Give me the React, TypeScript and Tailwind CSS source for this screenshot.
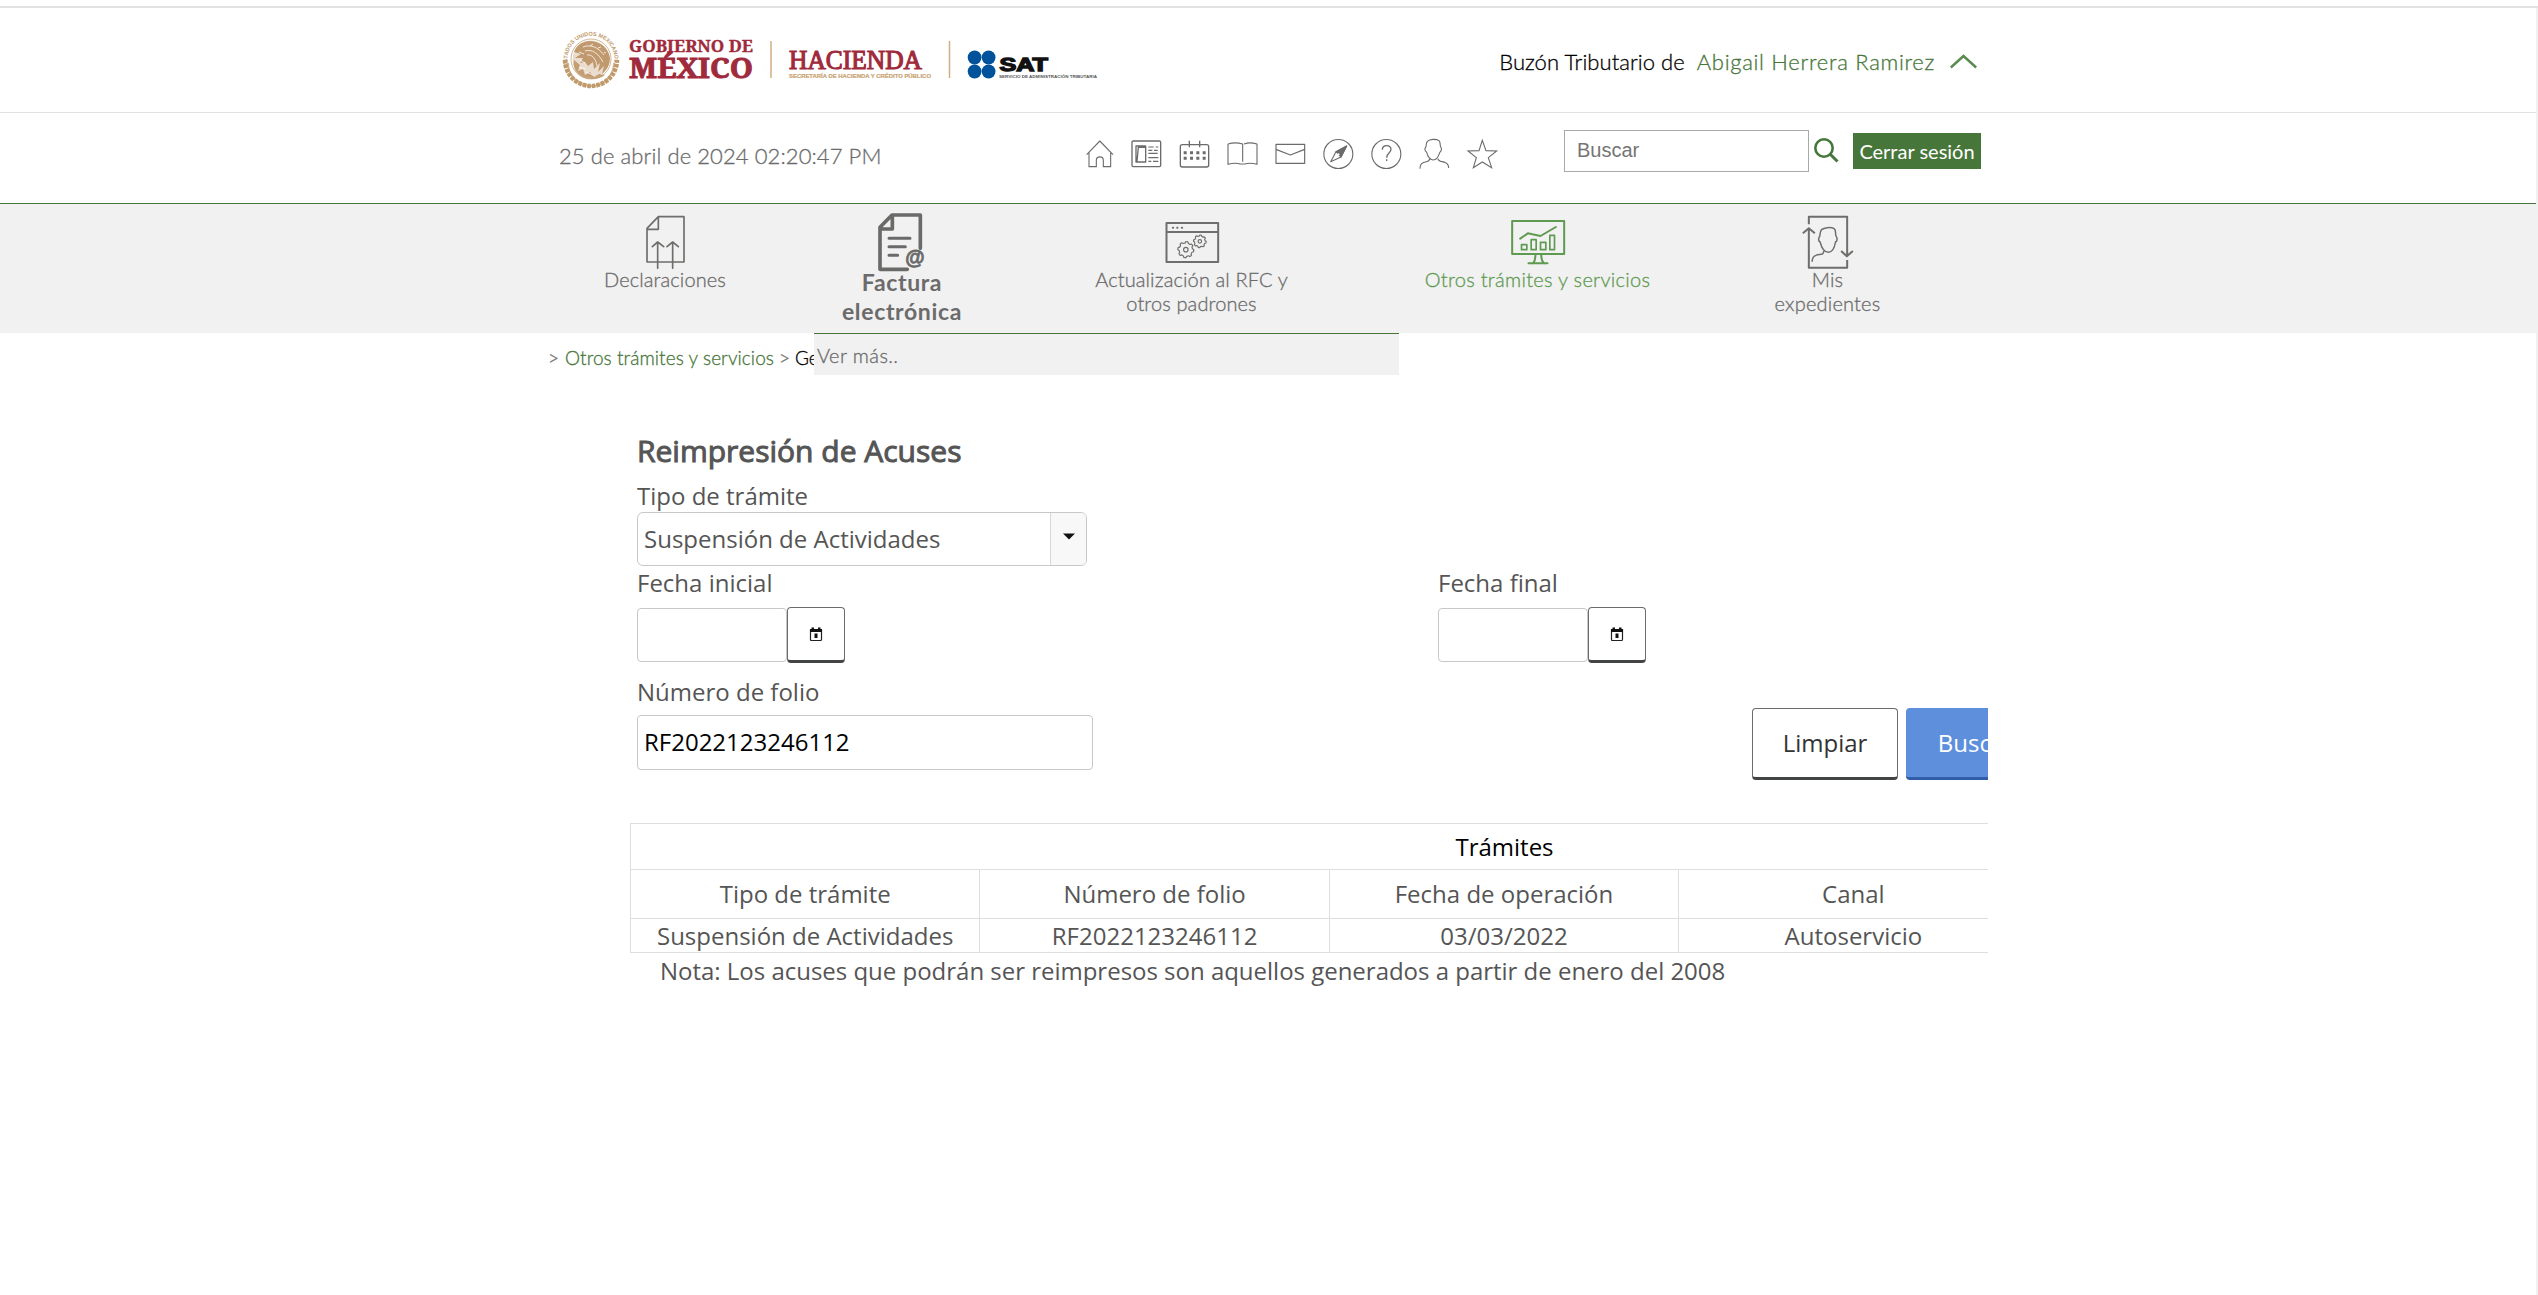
import React from "react";

const lato = "font-['Lato','Open_Sans',sans-serif]";
const openSans = "font-['Open_Sans','Noto_Sans',sans-serif]";

function Logos() {
  return (
    <svg width="552" height="64" viewBox="560 28 552 64" className="block">
      <defs>
        <path id="seal-arc" d="M568.5 66 A23.5 23.5 0 1 1 613.5 66" />
      </defs>
      <g fill="none" stroke="#c09a6b">
        <circle cx="591" cy="59" r="20" strokeWidth="1" opacity=".7" />
        <path d="M565 60 A26 26 0 0 0 617 60" strokeWidth="4.5" strokeDasharray="3.6 1" />
        <path d="M568 63 A23 23 0 0 0 614 63" strokeWidth="2" opacity=".7" />
      </g>
      <text fontFamily="Liberation Sans" fontWeight="700" fontSize="5.6" fill="#c09a6b">
        <textPath href="#seal-arc" textLength="84" lengthAdjust="spacingAndGlyphs">ESTADOS UNIDOS MEXICANOS</textPath>
      </text>
      <g fill="#b98f5e">
        <path d="M574 52 C577 43 587 39 596 42 C603 44 609 50 610 58 C610 65 607 70 602 74 L604 66 L598 72 L600 63 L594 69 L593 62 L588 66 L585 62 L580 63 L583 58 L575 58 L581 54 Z" opacity=".85" />
        <path d="M574 60 C572 68 577 75 585 78 C592 80 600 79 605 75 L599 74 L594 77 L590 72 L585 75 L583 69 L578 71 L580 65 Z" opacity=".8" />
        <circle cx="591" cy="59" r="18.500" opacity=".3" />
      </g>
      <g fill="none" stroke="#fff" strokeWidth=".9" opacity=".85">
        <path d="M583 47 C590 44 598 47 604 55 M585 51 C592 49 598 53 603 62 M587 55 C592 54 596 59 597 66 M579 52 l5 2 M580 60 l5 3 M579 67 l7 2 M586 72 l7 3 M590 46 l3 -2 M598 48 l3 -1 M604 52 l2 1" />
      </g>
      <g fontFamily="Noto Serif, Liberation Serif, serif" fontWeight="700" fill="#9f2a3c" stroke="#9f2a3c">
        <text x="629" y="51.500" fontSize="16.500" strokeWidth=".35" textLength="124" lengthAdjust="spacingAndGlyphs">GOBIERNO DE</text>
        <text x="629" y="78.300" fontSize="27.500" strokeWidth=".9" textLength="124" lengthAdjust="spacingAndGlyphs">MÉXICO</text>
      </g>
      <text x="789" y="69" fontFamily="Liberation Serif, serif" fontSize="26.5" fill="#9f2a3c" stroke="#9f2a3c" strokeWidth="1.1" textLength="133" lengthAdjust="spacingAndGlyphs">HACIENDA</text>
      <text x="789" y="78" fontFamily="Liberation Sans" fontWeight="700" fontSize="5.6" fill="#c9a373" stroke="#c9a373" strokeWidth=".2" textLength="142" lengthAdjust="spacingAndGlyphs">SECRETARÍA DE HACIENDA Y CRÉDITO PÚBLICO</text>
      <path d="M771 41V78M949.500 41V78" stroke="#d0ae84" strokeWidth="1.5" />
      <g fill="#00529b">
        <circle cx="974.600" cy="57.500" r="6.900" />
        <circle cx="988.600" cy="57.500" r="6.900" />
        <circle cx="974.600" cy="71.500" r="6.900" />
        <circle cx="988.600" cy="71.500" r="6.900" />
      </g>
      <text x="999.500" y="71" fontFamily="Liberation Sans" fontWeight="700" fontSize="18" fill="#111" stroke="#111" strokeWidth="1.3" textLength="48.500" lengthAdjust="spacingAndGlyphs">SAT</text>
      <text x="999" y="78" fontFamily="Liberation Sans" fontWeight="700" fontSize="4.4" fill="#555" textLength="98" lengthAdjust="spacingAndGlyphs">SERVICIO DE ADMINISTRACIÓN TRIBUTARIA</text>
    </svg>
  );
}

function ToolIcon({ index, children }: { index: number; children: React.ReactNode }) {
  return (
    <svg width="30" height="30" viewBox={`${71 + index * 144} 87 90 90`} className="block overflow-visible" fill="none" stroke="#6b6b6b" strokeWidth="3.3" strokeLinejoin="round">
      {children}
    </svg>
  );
}

function Toolbar() {
  return (
    <div className="flex gap-[18px]">
      <ToolIcon index={0}>
        <path d="M79 134L118.500 93L158 134M86 128V170H108V151a10.500 10.500 0 0 1 21 0V170H151V128" />
      </ToolIcon>
      <ToolIcon index={1}>
        <rect x="215" y="93" width="86" height="77" rx="4" strokeWidth="4" />
        <path d="M227 108H256V156H227ZM230 154L234 112H254" strokeWidth="4" />
        <path d="M264 111H280M286 111H294M264 121H276M281 121H292M264 130H292M264 143H294M264 154H273M278 154H294" />
      </ToolIcon>
      <ToolIcon index={2}>
        <rect x="360" y="104" width="85" height="67" rx="6" strokeWidth="4" />
        <path d="M387 92V112M418 92V112" strokeWidth="4" />
        <path d="M370 128H436M370 145H436" strokeWidth="9" strokeDasharray="9 10" />
      </ToolIcon>
      <ToolIcon index={3}>
        <path d="M503 102Q525 95 547 102V155M503 102V163Q525 157 540 162H553Q570 157 590 163V102Q568 95 551 102" />
      </ToolIcon>
      <ToolIcon index={4}>
        <path d="M647 103H733V160H647ZM647 118L690 135L733 118" strokeWidth="3.500" />
      </ToolIcon>
      <ToolIcon index={5}>
        <circle cx="834" cy="132" r="43.500" />
        <path d="M859 108L827 125L811 155L842 141Z" />
        <path d="M859 108L827 125L842 141Z" fill="#6b6b6b" />
        <circle cx="834" cy="133" r="3.500" fill="#fff" stroke="none" />
      </ToolIcon>
      <ToolIcon index={6}>
        <circle cx="978" cy="132" r="43.500" />
        <path d="M966 119C966 103 992 103 992 118C992 130 979 128 979 143M979 148V153" strokeWidth="4" />
      </ToolIcon>
      <ToolIcon index={7}>
        <path d="M1101 94C1108 87 1128 86 1136 92C1142 99 1138 106 1141 110C1146 118 1142 124 1138 128C1134 142 1128 150 1118 150C1107 148 1102 138 1099 127C1093 122 1093 115 1097 110C1098 104 1097 99 1101 94ZM1108 146C1108 157 1098 153 1088 158C1082 161 1079 167 1079 176M1133 146C1134 157 1146 153 1156 158C1162 161 1165 167 1165 174" />
      </ToolIcon>
      <ToolIcon index={8}>
        <path d="M1266 91L1277 122L1309 123L1284 143L1294 173L1266 156L1239 173L1248 143L1223 123L1256 122Z" strokeLinejoin="miter" />
      </ToolIcon>
    </div>
  );
}

function Gear({ cx, cy, r }: { cx: number; cy: number; r: number }) {
  const points = Array.from({ length: 48 }, (_, i) => {
    const a = (i / 48) * Math.PI * 2;
    const radius = i % 6 < 3 ? r : r * 0.83;
    return `${cx + radius * Math.cos(a)},${cy + radius * Math.sin(a)}`;
  }).join(" ");
  return (
    <>
      <polygon points={points} />
      <circle cx={cx} cy={cy} r={r * 0.28} />
    </>
  );
}

function NavIcon({ viewBox, width, color, children }: { viewBox: string; width: number; color: string; children: React.ReactNode }) {
  return (
    <svg viewBox={viewBox} width={width} height="65" className="block overflow-visible" fill="none" stroke={color} strokeWidth="5" strokeLinejoin="round" strokeLinecap="round">
      {children}
    </svg>
  );
}

const navLabel = "-mt-0.5 text-center text-xl leading-6 font-light [-webkit-text-stroke:0.3px]";

function Navigation() {
  return (
    <nav className="relative h-[130px] border-t border-[#47763a] bg-[#f1f1f1]">
      <div className={`mx-auto flex w-[1440px] text-[#6b6b6b] ${lato}`}>
        <div className="flex w-[234px] flex-col items-center">
          <NavIcon viewBox="312 27 126 195" width={42} color="#6e6e6c">
            <path d="M355 65H432V201H321V100ZM355 65V103H323M353 220V141M337 155L353 141L371 155M398 220V141M381 155L398 141L415 155" />
          </NavIcon>
          <span className={`${navLabel} tracking-[0.1px]`}>Declaraciones</span>
        </div>
        <div className="flex w-60 flex-col items-center">
          <NavIcon viewBox="1008 27 156 195" width={52} color="#6a6a69">
            <path d="M1141 160V60H1056L1020 97V223H1102M1057 62V102H1022" strokeWidth="11" />
            <path d="M1047 130H1110M1047 155H1096M1047 181H1073" strokeWidth="9" />
            <text x="1096" y="208" fontFamily="Liberation Sans" fontWeight="700" fontSize="60" fill="#6a6a69" stroke="#6a6a69" strokeWidth="2.5" textLength="58" lengthAdjust="spacingAndGlyphs">@</text>
          </NavIcon>
          <span className="-mt-px text-center text-[23px] leading-[29px] font-bold tracking-[0.65px]">Factura<br />electrónica</span>
        </div>
        <div className="flex w-[339px] flex-col items-center">
          <NavIcon viewBox="364.5 27 180 195" width={60} color="#6e6e6c">
            <path d="M378 84H533V201H378ZM378 111H533" strokeWidth="6" />
            <path d="M397 98.500H398M410 98.500H411M424 98.500H425" strokeWidth="6" />
            <g strokeWidth="3.500">
              <Gear cx={436} cy={164} r={24} />
              <Gear cx={478} cy={139} r={19} />
            </g>
          </NavIcon>
          <span className={`${navLabel} tracking-[0.12px]`}>Actualización al RFC y<br />otros padrones</span>
        </div>
        <div className="flex w-[353px] flex-col items-center text-[#5f9a51]">
          <NavIcon viewBox="1402.5 27 180 195" width={60} color="#5f9a51">
            <path d="M1415 78H1571V177H1415ZM1485 179Q1484 200 1477 205M1502 179Q1503 200 1511 205M1464 205H1521M1439 131L1462 115L1500 123L1546 96" strokeWidth="6" />
            <path d="M1443 149H1459V164H1443ZM1472 134H1487V164H1472ZM1500 142H1516V164H1500ZM1528 121H1542V164H1528Z" />
          </NavIcon>
          <span className={`${navLabel} tracking-[0.3px]`}>Otros trámites y servicios</span>
        </div>
        <div className="flex w-[227px] flex-col items-center">
          <NavIcon viewBox="772.5 27 180 195" width={60} color="#6e6e6c">
            <path d="M805 88V65H920V183M902 168L919 184L937 168M920 195V218H805V100M787 115L805 100L823 115" strokeLinecap="butt" strokeWidth="6" />
            <path d="M843 104C850 98 870 95 881 101C888 107 884 116 886 122C892 130 890 139 885 141C882 159 876 171 864 172C851 172 843 158 839 141C833 139 833 130 838 123C839 116 838 110 843 104ZM849 170C850 182 836 176 826 181C819 184 815 190 815 199" strokeWidth="4.500" />
          </NavIcon>
          <span className={`${navLabel} tracking-[0.2px]`}>Mis<br />expedientes</span>
        </div>
      </div>
      <div className={`absolute top-[129px] left-[814px] z-10 h-[42px] w-[585px] border-t border-[#47763a] bg-[#f1f1f1] pt-[9px] pl-[3px] text-xl leading-6 font-light tracking-[0.4px] text-[#6b6b6b] [-webkit-text-stroke:0.3px] ${lato}`}>
        Ver más..
      </div>
    </nav>
  );
}

function CalendarIcon() {
  return (
    <svg width="14" height="15" viewBox="0 0 14 15" className="block">
      <path d="M1.500 2.500H12.500V12.500Q12.500 13.500 11.500 13.500H2.500Q1.500 13.500 1.500 12.500Z" fill="none" stroke="#222" strokeWidth="1.200" />
      <path d="M1 2H13V5H1ZM2.500 0.500H5V3H2.500ZM9 0.500H11.500V3H9ZM5.500 6.500H8.500V11H5.500Z" fill="#111" />
    </svg>
  );
}

function DateField({ label }: { label: string }) {
  return (
    <div>
      <div className="leading-8">{label}</div>
      <div className="mt-2 flex items-start">
        <div className="mt-px h-[54px] w-[150px] rounded border border-[#c8c8c8] bg-white" />
        <button className="flex h-14 w-[58px] items-center justify-center rounded border border-b-[3px] border-[#6b6b6b] border-b-[#434545] bg-white">
          <CalendarIcon />
        </button>
      </div>
    </div>
  );
}

const rows = [
  { height: "h-[49px] pb-0.5", cells: ["Tipo de trámite", "Número de folio", "Fecha de operación", "Canal", ""] },
  { height: "h-[34px]", cells: ["Suspensión de Actividades", "RF2022123246112", "03/03/2022", "Autoservicio", ""] },
];

export default function App() {
  return (
    <div className="h-[1295px] overflow-hidden bg-white pt-1.5">
      <div className="h-full border-t-2 border-[#e1e1e1]">
        <div className="h-full border-r-2 border-[#f1f1f1]">
          <header className={`font-light ${lato}`}>
            <div className="h-[105px] border-b border-[#e1e1e1]">
              <div className="mx-auto flex w-[1440px] items-center justify-between pt-5 pr-[11px] pl-3">
                <Logos />
                <div className="flex items-center pt-[3px] text-[22px] leading-7 [-webkit-text-stroke:0.3px]">
                  <span className="tracking-[0.05px] text-black">Buzón Tributario de</span>
                  <span className="ml-3 tracking-[0.7px] text-[#47763a]">Abigail Herrera Ramirez</span>
                  <svg width="27" height="15" viewBox="0 0 27 15" className="ml-[15px]" fill="none" stroke="#5b8b50" strokeWidth="2.500">
                    <path d="M0.800 13.500L13.500 2L26.200 13.500" />
                  </svg>
                </div>
              </div>
            </div>
            <div className="mx-auto flex h-[90px] w-[1440px] items-start pl-3">
              <span className="mt-[29px] -ml-px w-[525px] text-[22px] leading-7 tracking-[0.09px] text-[#6b6b6b] [-webkit-text-stroke:0.3px]">25 de abril de 2024 02:20:47 PM</span>
              <div className="mt-[26px] w-[414px]"><Toolbar /></div>
              <div className="mt-[17px] ml-[66px] h-[42px] w-[245px] border border-[#a9a9a9] pl-3 font-['Liberation_Sans',Arial,sans-serif] text-xl leading-[38px] font-normal text-[#757575]">Buscar</div>
              <svg width="25" height="25" viewBox="0 0 25 25" className="mt-[25px] ml-[5px]" fill="none" stroke="#47763a">
                <circle cx="10" cy="10" r="8.700" strokeWidth="2.600" />
                <path d="M16 16L23.500 23.500" strokeWidth="3" />
              </svg>
              <button className="mt-5 ml-[14px] h-9 w-32 bg-[#47763a] text-center text-xl leading-9 font-normal whitespace-nowrap text-white">Cerrar sesión</button>
            </div>
          </header>
          <Navigation />
          <main className="mx-auto w-[1440px] overflow-hidden">
            <div className={`flex pt-[13px] text-[19px] leading-6 font-light whitespace-pre text-[#47763a] [-webkit-text-stroke:0.3px] ${lato}`}>
              <span className="w-[17px] text-[#6b6b6b]">&gt;</span>
              <span className="tracking-[0.08px]">Otros trámites y servicios</span>
              <span className="ml-[5px] w-4 text-[#6b6b6b]">&gt;</span>
              <span className="w-5 overflow-hidden text-black">Ge</span>
            </div>
            <section className={`pt-[61px] pl-[89px] text-2xl text-[#555] ${openSans}`}>
              <h1 className="text-[30px] leading-10 font-normal [-webkit-text-stroke:1px]">Reimpresión de Acuses</h1>
              <div className="mt-[9px] leading-8">Tipo de trámite</div>
              <div className="flex h-[54px] w-[450px] overflow-hidden rounded-md border border-[#c8c8c8]">
                <span className="flex-1 pl-1.5 leading-[52px]">Suspensión de Actividades</span>
                <span className="flex w-9 items-center justify-center border-l border-[#d8d8d8] bg-[#f8f8f8] pb-1.5">
                  <svg width="12" height="7" viewBox="0 0 12 7"><path d="M0 0.500H12L6 6.500Z" fill="#111" /></svg>
                </span>
              </div>
              <div className="mt-px flex">
                <div className="w-[801px]"><DateField label="Fecha inicial" /></div>
                <DateField label="Fecha final" />
              </div>
              <div className="flex">
                <div className="w-[1115px] shrink-0 pt-[13px]">
                  <div className="leading-8">Número de folio</div>
                  <div className="mt-[7px] h-[55px] w-[456px] rounded border border-[#c8c8c8] pl-1.5 leading-[52px] text-black">RF2022123246112</div>
                </div>
                <div className="mt-[45px] flex shrink-0 gap-2">
                  <button className="h-[72px] w-[146px] rounded border border-b-[3px] border-[#6b6b6b] border-b-[#434545] bg-white text-[#333]">Limpiar</button>
                  <button className="h-[72px] w-[140px] rounded border-b-[3px] border-[#325ea9] bg-[#5d8fdc] text-white">Buscar</button>
                </div>
              </div>
            </section>
            <section className={`mt-[43px] text-2xl leading-8 text-[#555] ${openSans}`}>
              <div className="ml-[82px] w-[1748px] border-t border-l border-[#dedede]">
                <div className="flex h-[46px] items-center justify-center border-b border-[#dedede] text-black">Trámites</div>
                {rows.map((row) => (
                  <div key={row.cells[0]} className="grid grid-cols-5 border-b border-[#dedede]">
                    {row.cells.map((cell, i) => (
                      <div key={i} className={`-mb-px flex items-center justify-center border-r border-[#dedede] ${row.height}`}>{cell}</div>
                    ))}
                  </div>
                ))}
              </div>
              <p className="mt-0.5 pl-28 tracking-[-0.015px]">Nota: Los acuses que podrán ser reimpresos son aquellos generados a partir de enero del 2008</p>
            </section>
          </main>
        </div>
      </div>
    </div>
  );
}
